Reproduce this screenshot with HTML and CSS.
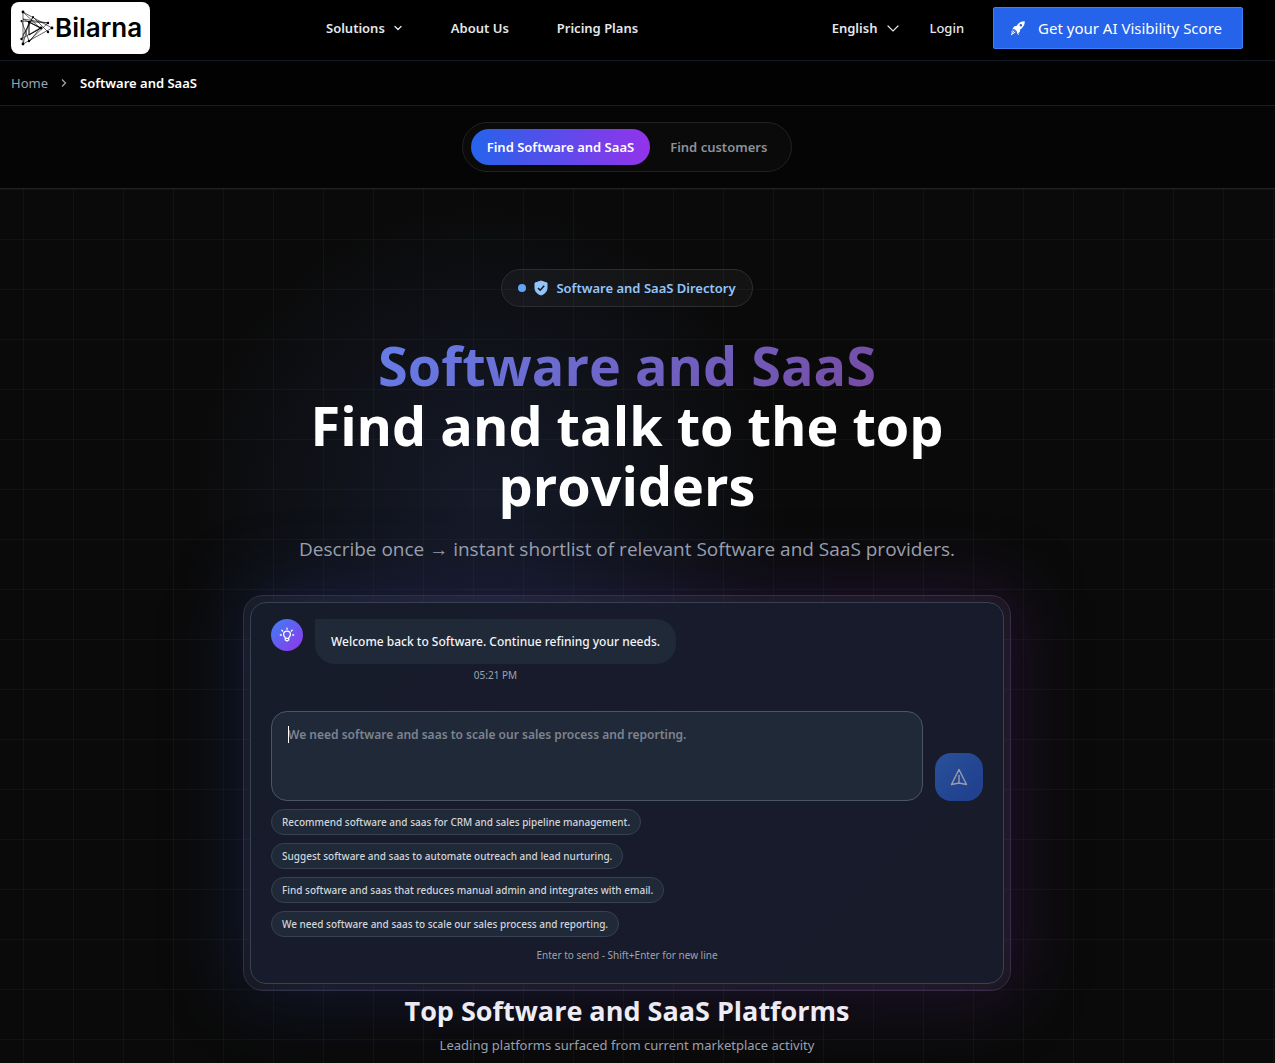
FILE: index.html
```html
<!DOCTYPE html>
<html lang="en">
<head>
<meta charset="utf-8">
<meta name="viewport" content="width=device-width, initial-scale=1">
<title>Software and SaaS | Bilarna</title>
<link rel="stylesheet" href="styles.css">
</head>
<body>
<header class="site-header">
  <a class="logo" href="#">
    <svg class="logo-mark" width="34" height="36" viewBox="0 0 34 36" aria-hidden="true">
      <g fill="none" stroke="#000" stroke-width="0.6">
        <path d="M3 2 32 18 3 34ZM3 2 20 18 10 31M13 7 1.500 29M3 9 28 13 9 31M1.500 11 28 13M1.500 11 9 31M3 25 13 7 28 22M9 12 3 34M3 9 20 18 3 28"/>
      </g>
      <path d="M9 12 21 18 9 25Z" fill="none" stroke="#000" stroke-width="1"/>
      <g fill="#000">
        <circle cx="3" cy="2" r="1.400"/><circle cx="32" cy="18" r="1.400"/><circle cx="3" cy="34" r="1.400"/><circle cx="1.500" cy="11" r="1"/><circle cx="1.500" cy="29" r="1.200"/><circle cx="13" cy="7" r="1"/><circle cx="28" cy="13" r="1.200"/><circle cx="28" cy="22" r="1.200"/><circle cx="9" cy="31" r="1.200"/><circle cx="21" cy="18" r="1.400"/><circle cx="9" cy="12" r="1.200"/>
      </g>
    </svg>
    <span class="logo-text">Bilarna</span>
  </a>
  <nav class="main-nav" aria-label="Main">
    <button class="nav-item" type="button">Solutions
      <svg width="10" height="10" viewBox="0 0 10 10" aria-hidden="true"><path d="M2 3.500 5 6.500 8 3.500" fill="none" stroke="currentColor" stroke-width="1.300" stroke-linecap="round"/></svg>
    </button>
    <a class="nav-item" href="#">About Us</a>
    <a class="nav-item" href="#">Pricing Plans</a>
  </nav>
  <div class="header-actions">
    <button class="nav-item language" type="button">English
      <svg width="12" height="12" viewBox="0 0 12 12" aria-hidden="true"><path d="M1 4 6 9 11 4" fill="none" stroke="currentColor" stroke-width="1.200" stroke-linecap="round"/></svg>
    </button>
    <a class="login" href="#">Login</a>
    <a class="cta" href="#">
      <svg width="16" height="16" viewBox="0 0 16 16" aria-hidden="true"><path fill="currentColor" fill-rule="evenodd" d="M14.800 1.200C11.500 1 9 2.500 7.200 5L6.500 6 4.300 6.300 2.300 9.200 4.700 9.300 6.900 11.500 7 14 9.800 12 10.200 9.600C13.200 7.300 14.900 4.800 14.800 1.200ZM10.800 4a1.300 1.300 0 1 1 0 2.600 1.300 1.300 0 0 1 0-2.600Z"/><path d="M4 10.600 1.300 14.700 5.400 12M2.800 10.600 1.200 12.200M8.800 13.500 8.200 14.800" fill="none" stroke="currentColor" stroke-width="1"/></svg>
      Get your AI Visibility Score
    </a>
  </div>
</header>

<nav class="breadcrumb" aria-label="Breadcrumb">
  <a href="#">Home</a>
  <svg width="8" height="10" viewBox="0 0 8 10" aria-hidden="true"><path d="M2 1.500 5.500 5 2 8.500" fill="none" stroke="currentColor" stroke-width="1.300"/></svg>
  <span class="current" aria-current="page">Software and SaaS</span>
</nav>

<div class="mode-bar">
  <div class="mode-switch">
    <button class="mode active" type="button">Find Software and SaaS</button>
    <button class="mode" type="button">Find customers</button>
  </div>
</div>

<main class="hero">
  <div class="directory-badge">
    <span class="dot"></span>
    <svg width="14" height="16" viewBox="0 0 14 16" aria-hidden="true"><path d="M7 1 13 3V8C13 11.500 10.500 14 7 15 3.500 14 1 11.500 1 8V3Z" fill="#93c5fd" stroke="#93c5fd" stroke-linejoin="round"/><path d="M4 8 6.200 10.200 10.200 5.800" fill="none" stroke="#15181f" stroke-width="1.500"/></svg>
    Software and SaaS Directory
  </div>
  <h1><span class="gradient-text">Software and SaaS</span><span>Find and talk to the top providers</span></h1>
  <p class="lead">Describe once → instant shortlist of relevant Software and SaaS providers.</p>

  <section class="chat-frame" aria-label="Chat">
    <div class="chat">
      <div class="message">
        <span class="avatar">
          <svg width="16" height="16" viewBox="0 0 16 16" aria-hidden="true" fill="none" stroke="#fff" stroke-width="1.300" stroke-linecap="round"><path d="M6.300 11C6.300 10 4.600 9.600 4.600 7.500a3.400 3.400 0 0 1 6.800 0C11.400 9.600 9.700 10 9.700 11V13L8 14 6.300 13ZM6.500 11.300h3M8 1.200v1M2.800 3.200l.8.8M13.200 3.200l-.8.8M1.300 8h1M13.700 8h1"/></svg>
        </span>
        <div class="message-body">
          <p class="bubble">Welcome back to Software. Continue refining your needs.</p>
          <time>05:21 PM</time>
        </div>
      </div>
      <form class="composer">
        <div class="field">
          <textarea aria-label="Your message" placeholder="We need software and saas to scale our sales process and reporting."></textarea>
          <span class="caret" aria-hidden="true"></span>
        </div>
        <button class="send" type="button" aria-label="Send">
          <svg width="18" height="18" viewBox="0 0 18 18" aria-hidden="true" fill="none" stroke="currentColor" stroke-width="1.400" stroke-linejoin="round"><path d="M9 1.500 16.500 16.500 9 15 1.500 16.500ZM9 7V15"/></svg>
        </button>
      </form>
      <div class="chips">
        <button type="button">Recommend software and saas for CRM and sales pipeline management.</button>
        <button type="button">Suggest software and saas to automate outreach and lead nurturing.</button>
        <button type="button">Find software and saas that reduces manual admin and integrates with email.</button>
        <button type="button">We need software and saas to scale our sales process and reporting.</button>
      </div>
      <p class="hint">Enter to send - Shift+Enter for new line</p>
    </div>
  </section>

  <h2>Top Software and SaaS Platforms</h2>
  <p class="sub">Leading platforms surfaced from current marketplace activity</p>
</main>
</body>
</html>
```
FILE: styles.css
```css
* { box-sizing: border-box; }
body {
  margin: 0;
  background: #0a0a0a;
  color: #fff;
  font: 13px/20px "Noto Sans", "Open Sans", sans-serif;
}
h1, h2, p { margin: 0; }
a { color: inherit; text-decoration: none; }
button { font: inherit; color: inherit; background: none; border: 0; padding: 0; cursor: pointer; }
svg { flex: none; }

.site-header {
  display: grid;
  grid-template-columns: 315px 1fr auto;
  align-items: center;
  height: 61px;
  padding: 0 32px 4px 11px;
  background: #000;
  border-bottom: 1px solid #151a26;
}
.logo {
  display: flex;
  align-items: center;
  gap: 1px;
  justify-self: start;
  width: 139px;
  height: 52px;
  padding-left: 9px;
  border-radius: 8px;
  background: #fff;
}
.logo-text { color: #000; font: 600 26px/32px Inter, sans-serif; }
.main-nav, .header-actions { display: flex; align-items: center; }
.main-nav { gap: 48px; }
.nav-item { display: flex; align-items: center; gap: 8px; font-weight: 600; color: #e5e7eb; }
.language { gap: 10px; }
.login { margin: 0 29px 0 30px; font-size: 13px; font-weight: 500; color: #e5e7eb; }
.cta {
  display: flex;
  align-items: center;
  gap: 12px;
  height: 42px;
  padding: 0 20px 0 16px;
  border: 1px solid #3b82f6;
  border-radius: 2px;
  background: #2563eb;
  font-size: 15px;
}

.breadcrumb {
  display: flex;
  align-items: center;
  gap: 12px;
  height: 45px;
  padding: 0 11px;
  background: #020202;
  border-bottom: 1px solid #1c1c1c;
  color: #9ca3af;
}
.current { color: #fff; font-weight: 600; }

.mode-bar {
  display: flex;
  justify-content: center;
  padding: 16px 21px 16px 0;
  background: #050505;
  border-bottom: 1px solid #222;
}
.mode-switch {
  display: flex;
  gap: 4px;
  padding: 6px 8px;
  border: 1px solid #222;
  border-radius: 25px;
  background: #0a0a0a;
}
.mode { height: 36px; padding: 0 16px; border-radius: 18px; font-weight: 600; color: #8b919d; }
.mode.active { color: #fff; background: linear-gradient(90deg, #2563eb, #9333ea); }

.hero {
  display: flex;
  flex-direction: column;
  align-items: center;
  overflow: hidden;
  padding: 80px 21px 8px 0;
  text-align: center;
  background:
    linear-gradient(90deg, rgba(255, 255, 255, .03) 1px, transparent 1px) 23px 0 / 50px 50px,
    linear-gradient(rgba(255, 255, 255, .03) 1px, transparent 1px) 0 0 / 50px 50px,
    radial-gradient(circle at 38% 310px, rgba(40, 52, 90, .4), transparent 300px),
    #0a0a0a;
}
.directory-badge {
  display: flex;
  align-items: center;
  gap: 8px;
  height: 38px;
  padding: 0 16px;
  border: 1px solid #2b2d31;
  border-radius: 19px;
  background: rgba(255, 255, 255, .04);
  color: #93c5fd;
  font-weight: 600;
}
.dot { width: 8px; height: 8px; border-radius: 50%; background: #60a5fa; }
h1 {
  display: flex;
  flex-direction: column;
  align-items: center;
  max-width: 768px;
  margin-top: 28px;
  font: 700 54px/60px "Open Sans", sans-serif;
}
.gradient-text {
  background: linear-gradient(135deg, #667eea, #764ba2);
  background-clip: text;
  -webkit-background-clip: text;
  color: transparent;
}
.lead { margin-top: 20px; font: 19px/28px "Open Sans", sans-serif; color: #9ca3af; }

.chat-frame {
  position: relative;
  z-index: 0;
  width: 100%;
  max-width: 768px;
  margin-top: 32px;
  padding: 6px;
  border: 1px solid #322f3e;
  border-radius: 20px;
  background: rgba(255, 255, 255, .05);
}
.chat-frame::before {
  content: "";
  position: absolute;
  z-index: -1;
  inset: -8px;
  border-radius: 24px;
  background: linear-gradient(90deg, rgba(37, 63, 150, .28), rgba(97, 37, 140, .26));
  filter: blur(36px);
}
.chat {
  padding: 16px 20px 20px;
  border: 1px solid #374151;
  border-radius: 16px;
  background: linear-gradient(135deg, #161c2a, #181b2c 50%, #171b2a);
  text-align: left;
}
.message { display: flex; gap: 12px; }
.avatar {
  display: grid;
  place-items: center;
  width: 32px;
  height: 32px;
  border-radius: 50%;
  background: linear-gradient(135deg, #3b82f6, #9333ea);
}
.message-body { text-align: center; }
.bubble {
  padding: 13px 16px 12px;
  border-radius: 0 20px 20px 20px;
  background: #202937;
  color: #f3f4f6;
  font-size: 12px;
  font-weight: 500;
}
time { display: block; margin-top: 3px; font-size: 10px; line-height: 16px; color: #9ca3af; }
.composer { display: flex; align-items: flex-end; gap: 12px; margin-top: 28px; }
.field { position: relative; flex: 1; display: flex; }
textarea {
  flex: 1;
  height: 90px;
  padding: 13px 16px;
  border: 1px solid #4b5563;
  border-radius: 16px;
  outline: 0;
  resize: none;
  background: #202937;
  color: #fff;
  font: 600 12px/20px "Noto Sans", sans-serif;
}
textarea::placeholder { color: #7d8490; opacity: 1; }
.caret { position: absolute; left: 17px; top: 15px; width: 1px; height: 17px; background: #fff; }
.send {
  display: grid;
  place-items: center;
  width: 48px;
  height: 48px;
  border-radius: 16px;
  background: linear-gradient(135deg, #285199, #203d8c);
  color: #9a9ca8;
}
.chips { display: flex; flex-direction: column; align-items: flex-start; gap: 8px; margin-top: 8px; }
.chips button {
  padding: 4px 10px;
  border: 1px solid #374151;
  border-radius: 13px;
  background: #202937;
  color: #d1d5db;
  font-size: 10px;
  font-weight: 500;
  line-height: 16px;
}
.hint { margin-top: 10px; font-size: 10px; line-height: 16px; color: #9ca3af; text-align: center; }
h2 { margin-top: 4px; font: 700 27px/32px "Open Sans", sans-serif; }
.sub { margin-top: 8px; line-height: 20px; color: #9ca3af; }
```
